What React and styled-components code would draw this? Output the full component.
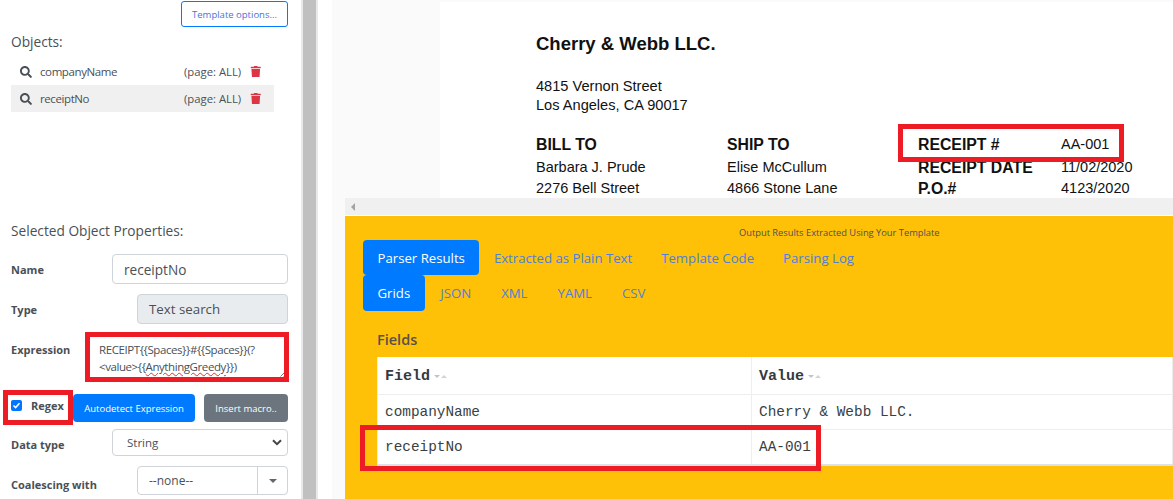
import React from "react";
import styled, { createGlobalStyle } from "styled-components";
import { FaSearch, FaTrash } from "react-icons/fa";

const GlobalStyle = createGlobalStyle`
  html, body {
    margin: 0;
    padding: 0;
    background: #fff;
  }
  body {
    font-family: "Open Sans", "Noto Sans", sans-serif;
    color: #495057;
  }
`;

const Page = styled.div`
  width: 1173px;
  height: 499px;
  display: flex;
  overflow: hidden;
`;

const Sidebar = styled.aside`
  width: 301px;
  flex: none;
  padding: 1px 13px 0 11px;
  box-sizing: border-box;
  background: #fff;
`;

const Splitter = styled.div`
  width: 17px;
  flex: none;
  background: #c0c0c0;
  border: solid #e9e9e9;
  border-width: 0 2px;
  box-sizing: border-box;
`;

const Main = styled.main`
  flex: 1;
  display: flex;
  min-width: 0;
  padding-left: 14px;
  background: #fff;
`;

const Viewer = styled.div`
  flex: 1;
  display: flex;
  flex-direction: column;
  min-width: 0;
  background: #fafafa;
`;

const DocArea = styled.div`
  height: 198px;
  box-sizing: border-box;
  display: flex;
  padding: 2px 0 0 108px;
`;

const DocSheet = styled.div`
  flex: 1;
  background: #fff;
  padding: 30px 0 0 96px;
  font-family: "Liberation Sans", Arial, sans-serif;
  color: #111;
  overflow: hidden;
`;

const Company = styled.div`
  font-size: 18.5px;
  font-weight: 700;
  line-height: 24px;
`;

const Address = styled.div`
  margin-top: 21px;
  font-size: 14.6px;
  line-height: 19px;
`;

const DocColumns = styled.div`
  display: flex;
  margin-top: 17px;
`;

const DocColumn = styled.div`
  width: ${(p) => p.$w}px;
  flex: none;
`;

const DocHead = styled.div`
  font-size: 15.8px;
  font-weight: 700;
  line-height: 25px;
`;

const DocLine = styled.div`
  font-size: 14.5px;
  line-height: 21px;
`;

const MetaRow = styled.div`
  display: flex;
  line-height: ${(p) => p.$h || 21}px;
  height: ${(p) => p.$h || 21}px;
`;

const MetaKey = styled.div`
  width: 143px;
  flex: none;
  font-size: 15.8px;
  font-weight: 700;
`;

const MetaValue = styled.div`
  font-size: 14.5px;
`;

const HScroll = styled.div`
  height: 18px;
  box-sizing: border-box;
  margin-left: 13px;
  background: #f0f0f0;
  border-bottom: 1px solid #fff;
  display: flex;
  align-items: center;
  padding-left: 6px;
`;

const ArrowLeft = styled.span`
  width: 0;
  height: 0;
  border-top: 4px solid transparent;
  border-bottom: 4px solid transparent;
  border-right: 4px solid #a3a3a3;
`;

const Results = styled.section`
  flex: 1;
  margin-left: 13px;
  background: #ffc107;
  padding: 11px 0 0 18px;
  min-height: 0;
`;

const Caption = styled.div`
  font-size: 9.3px;
  line-height: 12px;
  color: #495057;
  padding-left: 376px;
`;

const Tabs = styled.div`
  display: flex;
  gap: ${(p) => p.$gap || 0}px;
  margin-top: ${(p) => p.$mt || 0}px;
`;

const Tab = styled.div`
  padding: 0 14.5px;
  height: ${(p) => p.$h}px;
  display: flex;
  align-items: center;
  font-size: 13.2px;
  border-radius: 4px;
  color: ${(p) => (p.$active ? "#fff" : "#4f7fdc")};
  background: ${(p) => (p.$active ? "#007bff" : "transparent")};
`;

const FieldsTitle = styled.div`
  margin: 19px 0 0 14px;
  font-size: 14.5px;
  font-weight: 600;
  line-height: 20px;
  color: #5a5148;
`;

const Grid = styled.table`
  margin: 7px 0 0 14px;
  width: 796px;
  border-collapse: collapse;
  background: #fff;
  font-family: "Liberation Mono", "DejaVu Sans Mono", monospace;
  font-size: 14.4px;
  color: #3a3f44;
  table-layout: fixed;
  border-bottom: 2px solid #dee2e6;
`;

const Th = styled.th`
  height: 36px;
  padding: 1px 0 0 7px;
  text-align: left;
  font-weight: 700;
  font-size: 15px;
  color: #343a40;
  border: 1px solid #eee;
  border-top: 0;
  width: ${(p) => p.$w || "auto"};
`;

const Td = styled.td`
  height: 34px;
  padding: 0 0 0 7px;
  border: 1px solid #eee;
`;

const SortMark = styled.svg`
  margin-left: 4px;
  vertical-align: 1px;
`;

const Highlight = styled.div`
  position: absolute;
  left: ${(p) => p.$x}px;
  top: ${(p) => p.$y}px;
  width: ${(p) => p.$w}px;
  height: ${(p) => p.$h}px;
  border: 5px solid #ed1c24;
  box-sizing: border-box;
  pointer-events: none;
`;

const TopBar = styled.div`
  display: flex;
  justify-content: flex-end;
`;

const OutlineButton = styled.button`
  width: 107px;
  height: 26px;
  border: 1px solid #007bff;
  border-radius: 3px;
  background: #fff;
  color: #4a72d8;
  font: 400 9.5px "Open Sans", sans-serif;
  padding: 0;
`;

const SectionLabel = styled.div`
  font-size: 13.7px;
  line-height: 18px;
  color: #495057;
  margin-top: ${(p) => p.$mt}px;
`;

const ObjectList = styled.div`
  margin-top: 7px;
  width: 263px;
`;

const ObjectRow = styled.div`
  height: 27px;
  display: flex;
  align-items: center;
  padding-left: 9px;
  font-size: 11.5px;
  color: #495057;
  background: ${(p) => (p.$selected ? "#f0f0f0" : "transparent")};
`;

const ObjectName = styled.span`
  margin-left: 8px;
  width: 144px;
  letter-spacing: -0.4px;
`;

const PageTag = styled.span`
  width: 66px;
  font-size: 11.3px;
`;

const FormRow = styled.div`
  display: flex;
  align-items: center;
  justify-content: space-between;
  height: ${(p) => p.$h || 30}px;
  margin-top: ${(p) => p.$mt || 0}px;
`;

const FormLabel = styled.label`
  font-size: 11px;
  font-weight: 700;
  color: #4b4f54;
  padding-top: ${(p) => (p.$dy || 0) * 2}px;
`;

const ExpressionLabel = styled(FormLabel)`
  align-self: flex-start;
  line-height: 26px;
`;

const Field = styled.div`
  width: ${(p) => p.$w}px;
  height: ${(p) => p.$h || 30}px;
  box-sizing: border-box;
  border: 1px solid #ced4da;
  border-radius: 4px;
  display: flex;
  align-items: center;
  padding-left: ${(p) => p.$pad || 11}px;
  font-size: ${(p) => p.$size || 13.3}px;
  color: #495057;
  background: ${(p) => (p.$disabled ? "#e9ecef" : "#fff")};
`;

const TextArea = styled.div`
  position: relative;
  width: 189px;
  height: 40px;
  box-sizing: border-box;
  padding: 4px 0 0 0;
  font-size: 11.5px;
  line-height: 17px;
  color: #495057;
  letter-spacing: -0.42px;
  white-space: nowrap;
`;

const ResizeGrip = styled.svg`
  position: absolute;
  right: 2px;
  bottom: 0;
`;

const Squiggle = styled.span`
  text-decoration: underline wavy #e03030 1px;
`;

const RegexLabel = styled.label`
  display: flex;
  align-items: center;
  gap: 9px;
  font-size: 11px;
  font-weight: 700;
  color: #4b4f54;
  flex: none;
  width: 62px;
  margin-bottom: 5px;
`;

const Check = styled.span`
  width: 11px;
  height: 11px;
  border-radius: 2px;
  background: #0075ff;
  display: flex;
  align-items: center;
  justify-content: center;
`;

const ActionButton = styled.button`
  height: 28px;
  width: ${(p) => p.$w}px;
  flex: none;
  border: 0;
  border-radius: 4px;
  padding: 0;
  margin-left: ${(p) => p.$ml || 0}px;
  color: #fff;
  font: 400 9.5px "Open Sans", sans-serif;
  background: ${(p) => (p.$gray ? "#6c757d" : "#007bff")};
`;

const SelectCaret = styled.svg`
  margin-left: auto;
  margin-right: 5px;
`;

const ComboSplit = styled.span`
  margin-left: auto;
  width: 29px;
  height: 100%;
  border-left: 1px solid #ced4da;
  display: flex;
  align-items: center;
  justify-content: center;
`;

const ComboCaret = styled.span`
  width: 0;
  height: 0;
  border-left: 4px solid transparent;
  border-right: 4px solid transparent;
  border-top: 4px solid #666;
`;

const ActionRow = styled.div`
  display: flex;
  align-items: center;
  margin-top: 17px;
  height: 28px;
`;

const objects = [
  { name: "companyName" },
  { name: "receiptNo", selected: true },
];

const highlights = [
  { x: 85, y: 332, w: 204, h: 50 },
  { x: 3, y: 390, w: 70, h: 35 },
  { x: 898, y: 124, w: 226, h: 38 },
  { x: 360, y: 425, w: 461, h: 46 },
];

const SortArrows = () => (
  <SortMark width="13" height="5" viewBox="0 0 13 5">
    <path d="M0 1 H6 L3 4 Z" fill="#c4c4c4" />
    <path d="M7 4 H13 L10 1 Z" fill="#d4d4d4" />
  </SortMark>
);

export default function App() {
  return (
    <>
      <GlobalStyle />
      <Page>
        <Sidebar>
          <TopBar>
            <OutlineButton>Template options...</OutlineButton>
          </TopBar>
          <SectionLabel $mt={6}>Objects:</SectionLabel>
          <ObjectList>
            {objects.map((o) => (
              <ObjectRow key={o.name} $selected={o.selected}>
                <FaSearch size={12} color="#495057" />
                <ObjectName>{o.name}</ObjectName>
                <PageTag>(page: ALL)</PageTag>
                <FaTrash size={11.5} color="#dc3545" />
              </ObjectRow>
            ))}
          </ObjectList>
          <SectionLabel $mt={110}>Selected Object Properties:</SectionLabel>
          <FormRow $mt={14}>
            <FormLabel>Name</FormLabel>
            <Field $w={176} $size={13.6}>receiptNo</Field>
          </FormRow>
          <FormRow $mt={10}>
            <FormLabel>Type</FormLabel>
            <Field $w={151} $disabled>Text search</Field>
          </FormRow>
          <FormRow $h={40} $mt={13}>
            <ExpressionLabel>Expression</ExpressionLabel>
            <TextArea>
              RECEIPT{"{{Spaces}}"}#{"{{Spaces}}"}(?
              <br />
              {"<value>{{"}
              <Squiggle>AnythingGreedy</Squiggle>
              {"}})"}
              <ResizeGrip width="6" height="6" viewBox="0 0 6 6">
                <path d="M0.5 5.5 L5.5 0.5 M3.5 5.5 L5.5 3.5" stroke="#777" strokeWidth="1" />
              </ResizeGrip>
            </TextArea>
          </FormRow>
          <ActionRow>
            <RegexLabel>
              <Check>
                <svg width="9" height="9" viewBox="0 0 9 9">
                  <path d="M1.5 4.5 L3.6 6.6 L7.5 2.2" stroke="#fff" strokeWidth="1.6" fill="none" />
                </svg>
              </Check>
              Regex
            </RegexLabel>
            <ActionButton $w={122}>Autodetect Expression</ActionButton>
            <ActionButton $w={84} $gray $ml={9}>Insert macro..</ActionButton>
          </ActionRow>
          <FormRow $mt={7} $h={27}>
            <FormLabel $dy={2}>Data type</FormLabel>
            <Field $w={176} $h={27} $pad={14} $size={11.5}>
              String
              <SelectCaret width="10" height="7" viewBox="0 0 10 7">
                <path d="M1 1.2 L5 5.2 L9 1.2" stroke="#444" strokeWidth="2" fill="none" />
              </SelectCaret>
            </Field>
          </FormRow>
          <FormRow $mt={10} $h={29}>
            <FormLabel $dy={4}>Coalescing with</FormLabel>
            <Field $w={151} $h={29} $size={12}>
              --none--
              <ComboSplit><ComboCaret /></ComboSplit>
            </Field>
          </FormRow>
        </Sidebar>
        <Splitter />
        <Main>
          <Viewer>
            <DocArea>
              <DocSheet>
                <Company>Cherry &amp; Webb LLC.</Company>
                <Address>
                  4815 Vernon Street
                  <br />
                  Los Angeles, CA 90017
                </Address>
                <DocColumns>
                  <DocColumn $w={191}>
                    <DocHead>BILL TO</DocHead>
                    <DocLine>Barbara J. Prude</DocLine>
                    <DocLine>2276 Bell Street</DocLine>
                  </DocColumn>
                  <DocColumn $w={191}>
                    <DocHead>SHIP TO</DocHead>
                    <DocLine>Elise McCullum</DocLine>
                    <DocLine>4866 Stone Lane</DocLine>
                  </DocColumn>
                  <DocColumn $w={260}>
                    <MetaRow $h={25}>
                      <MetaKey>RECEIPT #</MetaKey>
                      <MetaValue>AA-001</MetaValue>
                    </MetaRow>
                    <MetaRow>
                      <MetaKey>RECEIPT DATE</MetaKey>
                      <MetaValue>11/02/2020</MetaValue>
                    </MetaRow>
                    <MetaRow>
                      <MetaKey>P.O.#</MetaKey>
                      <MetaValue>4123/2020</MetaValue>
                    </MetaRow>
                  </DocColumn>
                </DocColumns>
              </DocSheet>
            </DocArea>
            <HScroll><ArrowLeft /></HScroll>
            <Results>
              <Caption>Output Results Extracted Using Your Template</Caption>
              <Tabs $mt={1}>
                <Tab $active $h={35}>Parser Results</Tab>
                <Tab $h={35}>Extracted as Plain Text</Tab>
                <Tab $h={35}>Template Code</Tab>
                <Tab $h={35}>Parsing Log</Tab>
              </Tabs>
              <Tabs $gap={1}>
                <Tab $active $h={36}>Grids</Tab>
                <Tab $h={36}>JSON</Tab>
                <Tab $h={36}>XML</Tab>
                <Tab $h={36}>YAML</Tab>
                <Tab $h={36}>CSV</Tab>
              </Tabs>
              <FieldsTitle>Fields</FieldsTitle>
              <Grid>
                <thead>
                  <tr>
                    <Th $w="366px">Field<SortArrows /></Th>
                    <Th>Value<SortArrows /></Th>
                  </tr>
                </thead>
                <tbody>
                  <tr>
                    <Td>companyName</Td>
                    <Td>Cherry &amp; Webb LLC.</Td>
                  </tr>
                  <tr>
                    <Td>receiptNo</Td>
                    <Td>AA-001</Td>
                  </tr>
                </tbody>
              </Grid>
            </Results>
          </Viewer>
        </Main>
        {highlights.map((h) => (
          <Highlight key={`${h.x}-${h.y}`} $x={h.x} $y={h.y} $w={h.w} $h={h.h} />
        ))}
      </Page>
    </>
  );
}
